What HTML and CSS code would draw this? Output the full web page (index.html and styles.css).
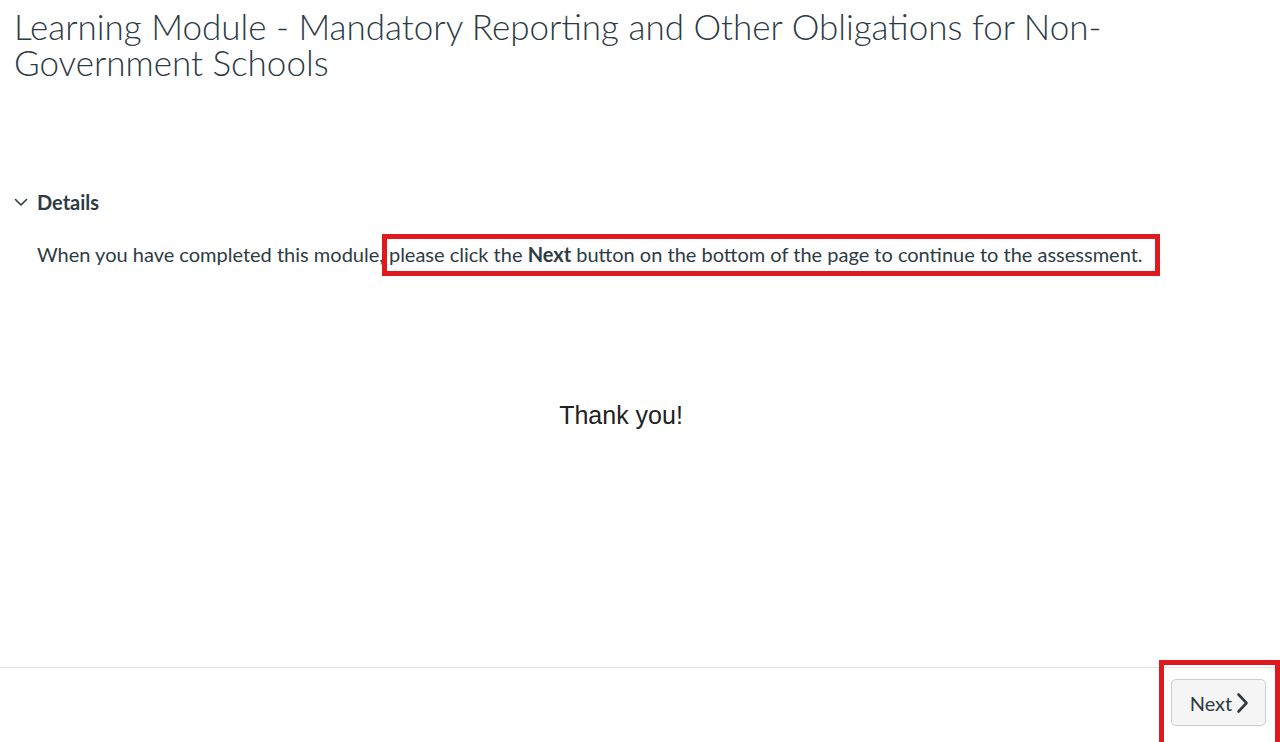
FILE: index.html
```html
<!DOCTYPE html>
<html>
<head>
<meta charset="utf-8">
<link rel="stylesheet" href="styles.css">
</head>
<body>
<div class="page">
  <main class="content">
    <h1 class="title">Learning Module - Mandatory Reporting and Other Obligations for Non-Government Schools</h1>
    <section class="details">
      <div class="details-toggle">
        <svg class="chev-down" width="14" height="10" viewBox="0 0 14 10"><path d="M1.5 2.5 L7 8 L12.5 2.5" fill="none" stroke="#2d3b45" stroke-width="1.6" stroke-linecap="round" stroke-linejoin="round"/></svg>
        <span class="details-label">Details</span>
      </div>
      <p class="details-text">When you have completed this module, <span class="hl">please click the <strong>Next</strong> button on the bottom of the page to continue to the assessment.</span></p>
    </section>
    <p class="thanks">Thank you!</p>
  </main>
  <footer class="footer">
    <div class="next-wrap">
      <button class="next-btn">Next<svg class="chev-right" width="13" height="22" viewBox="0 0 13 22"><path d="M2.5 2.5 L10.5 11 L2.5 19.5" fill="none" stroke="#2d3b45" stroke-width="2.6" stroke-linecap="round" stroke-linejoin="round"/></svg></button>
    </div>
  </footer>
</div>
</body>
</html>
```
FILE: styles.css
```css
html, body {
  margin: 0;
  padding: 0;
  background: #ffffff;
}
body {
  font-family: Lato, "Noto Sans", sans-serif;
  color: #2d3b45;
}
.page {
  height: 742px;
  display: flex;
  flex-direction: column;
  overflow: hidden;
}
.content {
  flex: 1;
  padding: 0 14px;
}
.title {
  margin: 8px 0 0 0;
  font-weight: 300;
  font-size: 35px;
  line-height: 36px;
  color: #2d3b45;
}
.details {
  margin-top: 110px;
}
.details-toggle {
  display: flex;
  align-items: center;
  height: 24px;
}
.chev-down {
  margin-left: 0;
  margin-right: 9px;
}
.details-label {
  font-weight: 700;
  font-size: 20px;
}
.details-text {
  margin: 28px 0 0 23px;
  font-size: 20px;
  line-height: 24px;
}
.details-text strong {
  font-weight: 700;
}
.hl {
  position: relative;
}
.hl::after {
  content: "";
  position: absolute;
  left: -7px;
  right: -17px;
  top: -8px;
  bottom: -10px;
  border: 5px solid #e0191f;
}
.thanks {
  margin: 134px 38px 0 0;
  text-align: center;
  font-family: "Liberation Sans", Arial, sans-serif;
  font-size: 25px;
  line-height: 30px;
  color: #222222;
}
.footer {
  height: 74px;
  border-top: 1px solid #e3e3e3;
  display: flex;
  justify-content: flex-end;
  align-items: flex-start;
  padding-right: 14px;
}
.next-wrap {
  position: relative;
  margin-top: 11px;
}
.next-wrap::after {
  content: "";
  position: absolute;
  left: -12px;
  top: -19px;
  right: -14px;
  bottom: -30px;
  border: 5px solid #e0191f;
  pointer-events: none;
}
.next-btn {
  display: flex;
  align-items: center;
  gap: 4px;
  height: 47px;
  width: 95px;
  justify-content: center;
  padding: 0 6px 0 8px;
  background: #f5f5f5;
  border: 1px solid #c7cdd1;
  border-radius: 5px;
  font-family: Lato, "Noto Sans", sans-serif;
  font-size: 20px;
  line-height: 24px;
  color: #2d3b45;
}
```
